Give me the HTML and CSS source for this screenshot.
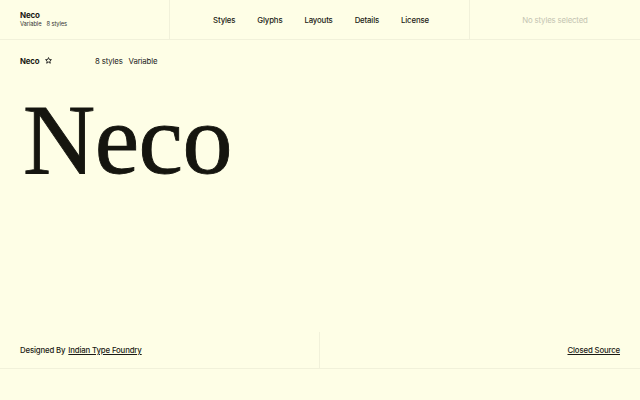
FILE: index.html
```html
<!DOCTYPE html>
<html>
<head>
<meta charset="utf-8">
<link rel="stylesheet" href="styles.css">
</head>
<body>
<header class="topbar">
  <div class="brand">
    <div class="brand-name">Neco</div>
    <div class="brand-meta"><span>Variable</span><span>8 styles</span></div>
  </div>
  <nav class="nav">
    <a>Styles</a><a>Glyphs</a><a>Layouts</a><a>Details</a><a>License</a>
  </nav>
  <div class="selection">No styles selected</div>
</header>
<main class="main">
  <div class="infobar">
    <div class="title"><b>Neco</b>
      <svg class="star" viewBox="0 0 10 10" width="7" height="7"><path d="M5 0.8 L6.2 3.6 L9.2 3.8 L6.9 5.8 L7.6 8.9 L5 7.3 L2.4 8.9 L3.1 5.8 L0.8 3.8 L3.8 3.6 Z" fill="none" stroke="#111" stroke-width="1.2" stroke-linejoin="round"/></svg>
    </div>
    <div class="meta"><span>8 styles</span><span>Variable</span></div>
  </div>
  <h1 class="specimen">Neco</h1>
</main>
<footer class="footer">
  <div class="credit">Designed By <a>Indian Type Foundry</a></div>
  <div class="license"><a>Closed Source</a></div>
</footer>
</body>
</html>
```
FILE: styles.css
```css
* { box-sizing: border-box; margin: 0; padding: 0; }
html, body { background: #fefee6; }
body {
  width: 640px;
  height: 400px;
  overflow: hidden;
  font-family: Inter, "Noto Sans", sans-serif;
  color: #1a1a14;
  letter-spacing: -0.15px;
}
a { color: inherit; text-decoration: underline; text-underline-offset: 1px; }
.topbar {
  display: grid;
  grid-template-columns: 170px 300px 170px;
  height: 40px;
  border-bottom: 1px solid #f1f1da;
}
.brand {
  padding: 10px 0 0 20px;
  border-right: 1px solid #f1f1da;
}
.brand-name { font-size: 8px; font-weight: 700; line-height: 10px; }
.brand-meta { font-size: 5.8px; line-height: 8px; display: flex; gap: 5px; color: #333; letter-spacing: -0.1px; }
.nav {
  display: flex;
  justify-content: center;
  align-items: center;
  font-size: 7.8px;
  font-weight: 500;
  border-right: 1px solid #f1f1da;
  padding-left: 3px;
}
.nav a { text-decoration: none; margin: 0 11px; }
.selection {
  display: flex;
  align-items: center;
  justify-content: center;
  font-size: 7.8px;
  color: #c4c4b2;
}
.main { height: 292px; padding: 0 20px; }
.infobar {
  display: flex;
  align-items: center;
  height: 41px;
  font-size: 7.8px;
}
.title { width: 75px; display: flex; align-items: center; gap: 6px; }
.title b { font-weight: 700; }
.star { display: block; }
.meta { display: flex; gap: 6px; color: #222; }
.specimen {
  font-family: "Liberation Serif", "Times New Roman", serif;
  font-weight: 400;
  font-size: 100px;
  line-height: 1;
  margin-top: 9px;
  margin-left: 3px;
  letter-spacing: -0.5px;
  color: #15150f;
  -webkit-text-stroke: 0.9px #15150f;
}
.footer {
  display: grid;
  grid-template-columns: 320px 320px;
  height: 37px;
  border-bottom: 1px solid #f1f1da;
  font-size: 7.8px;
  font-weight: 500;
}
.credit {
  display: flex;
  align-items: center;
  padding-left: 20px;
  border-right: 1px solid #f1f1da;
}
.credit a { margin-left: 3px; }
.license {
  display: flex;
  align-items: center;
  justify-content: flex-end;
  padding-right: 20px;
}
```
